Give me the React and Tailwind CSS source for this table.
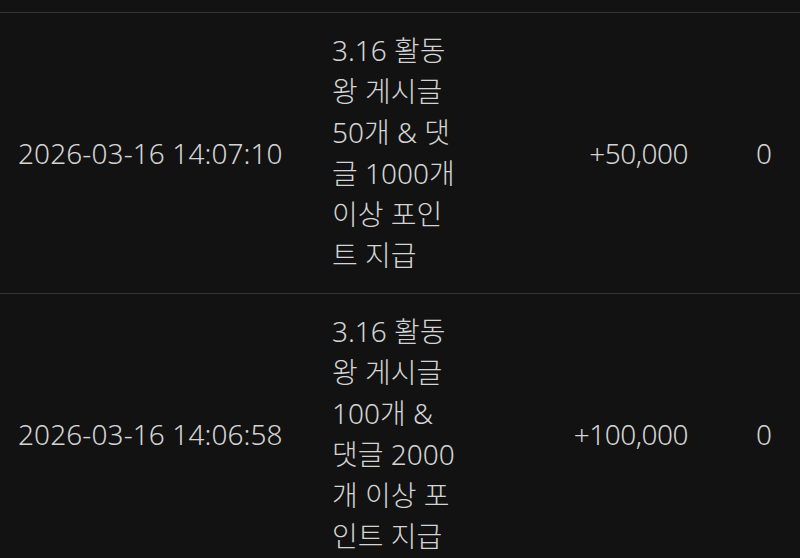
import React from 'react';

const rows = [
  {
    date: '2026-03-16 14:07:10',
    desc: '3.16 활동왕 게시글 50개 & 댓글 1000개 이상 포인트 지급',
    amount: '+50,000',
    balance: '0',
  },
  {
    date: '2026-03-16 14:06:58',
    desc: '3.16 활동왕 게시글 100개 & 댓글 2000개 이상 포인트 지급',
    amount: '+100,000',
    balance: '0',
  },
];

function Row({ row }) {
  return (
    <div className="flex items-center border-t border-[#333333] py-[17px]">
      <div className="w-[332px] shrink-0 pl-[18px] tracking-[0.1px]">{row.date}</div>
      <div className="w-[130px] shrink-0 leading-[41px]">{row.desc}</div>
      <div className="w-[226px] shrink-0 text-right tracking-[-0.5px]">{row.amount}</div>
      <div className="flex-1 pr-[28px] text-right">{row.balance}</div>
    </div>
  );
}

export default function App() {
  return (
    <div
      className="h-[558px] w-[800px] overflow-hidden bg-[#121212] text-[28px] font-light text-[#d4d4d4]"
      style={{ fontFamily: '"Noto Sans", "Noto Sans CJK KR", sans-serif' }}
    >
      <div className="h-[12px]" />
      {rows.map((row) => (
        <Row key={row.date} row={row} />
      ))}
    </div>
  );
}
